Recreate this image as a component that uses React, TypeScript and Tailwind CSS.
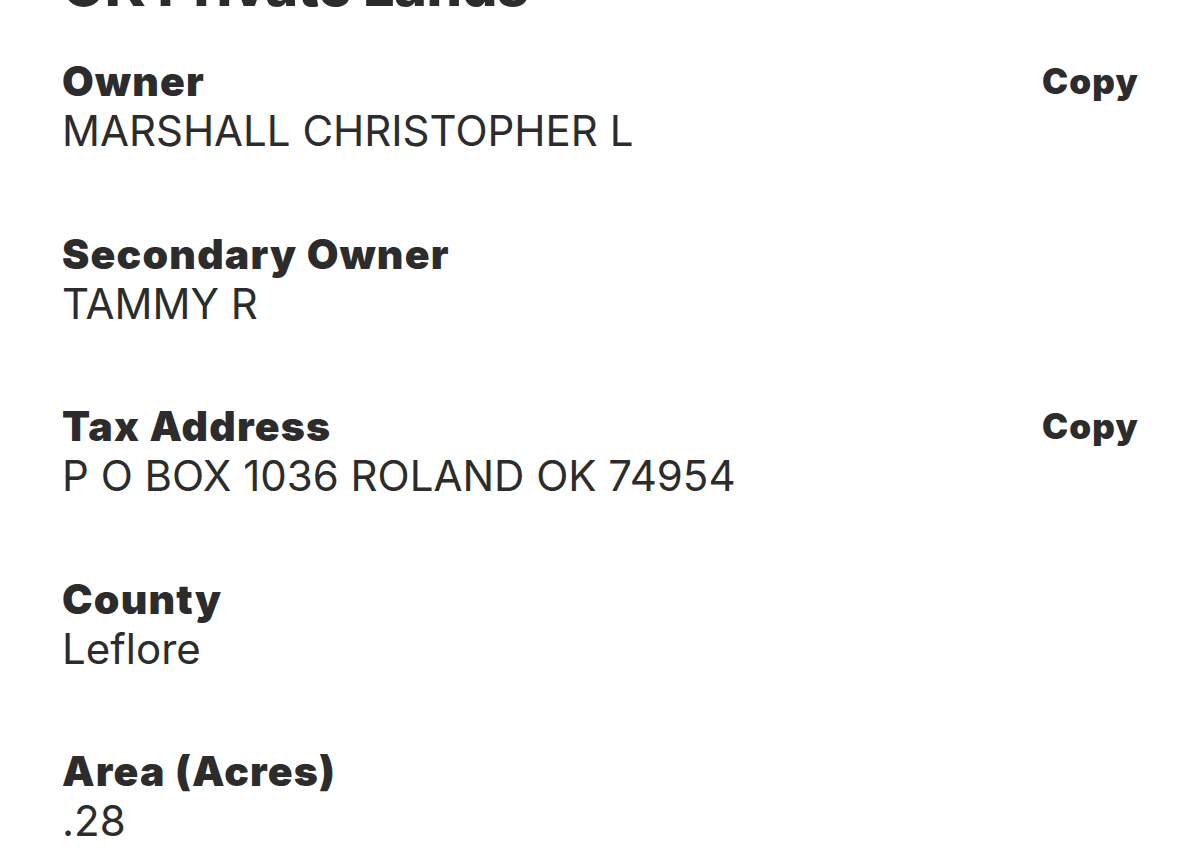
import React from "react";

const rows: { label: string; value: string; copy?: boolean }[] = [
  { label: "Owner", value: "MARSHALL CHRISTOPHER L", copy: true },
  { label: "Secondary Owner", value: "TAMMY R" },
  { label: "Tax Address", value: "P O BOX 1036 ROLAND OK 74954", copy: true },
  { label: "County", value: "Leflore" },
  { label: "Area (Acres)", value: ".28" },
];

export default function App() {
  return (
    <div
      className="w-[1200px] h-[857px] overflow-hidden bg-white text-[#2c2c2c] pl-[62px] pr-[61px]"
      style={{ fontFamily: "Inter, Roboto, 'Noto Sans', sans-serif" }}
    >
      <h1 className="mt-[-42px] text-[56px] leading-[56px] font-extrabold tracking-[-0.5px]">
        OK Private Lands
      </h1>
      <div className="mt-[42px] flex flex-col gap-[72.5px]">
        {rows.map((r) => (
          <div key={r.label} className="flex items-start justify-between">
            <div className="flex flex-col">
              <div className="text-[41px] leading-[50px] font-black tracking-[1.2px]">{r.label}</div>
              <div className="text-[42px] leading-[50px] font-normal">{r.value}</div>
            </div>
            {r.copy && (
              <div className="text-[35px] leading-[50px] font-black tracking-[1.2px]">Copy</div>
            )}
          </div>
        ))}
      </div>
    </div>
  );
}
